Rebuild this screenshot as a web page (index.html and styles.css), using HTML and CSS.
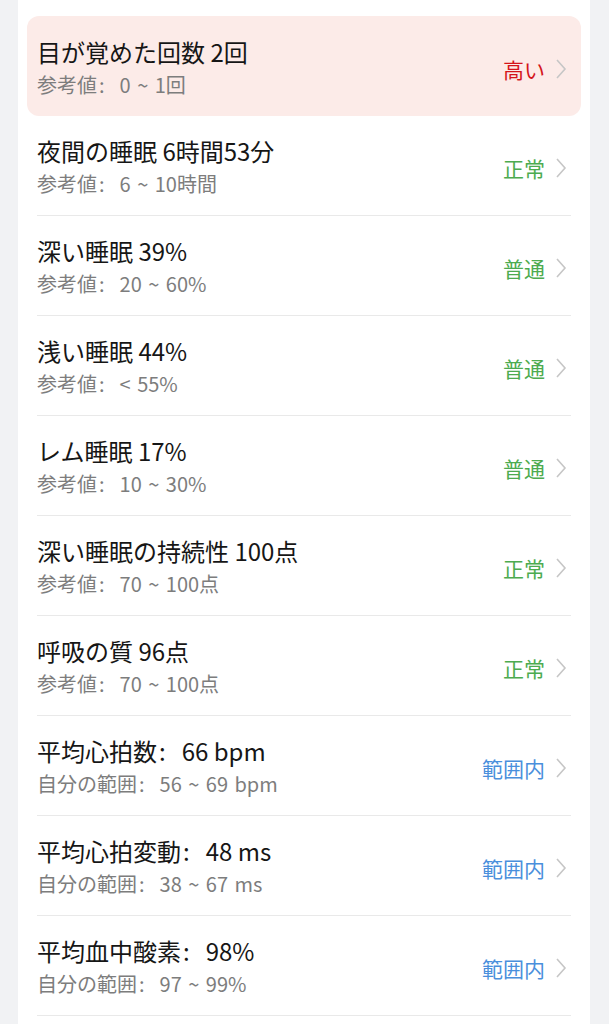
FILE: index.html
```html
<!DOCTYPE html>
<html lang="ja">
<head>
    <meta charset="UTF-8">
    <meta name="viewport" content="width=device-width, initial-scale=1.0">
    <title>睡眠の詳細</title>
    <link rel="stylesheet" href="styles.css">
</head>
<body>
    <div class="card">
        <!-- 注意が必要な項目 -->
        <div class="row row-alert">
            <div class="row-inner">
                <div class="texts">
                    <div class="title">目が覚めた回数 2回</div>
                    <div class="sub">参考値<span class="colon">:</span>0 ~ 1回</div>
                </div>
                <span class="status red">高い</span>
                <svg class="chev" viewBox="0 0 12 22"><path d="M2 2l8 9-8 9"/></svg>
            </div>
        </div>

        <div class="row">
            <div class="row-inner">
                <div class="texts">
                    <div class="title">夜間の睡眠 6時間53分</div>
                    <div class="sub">参考値<span class="colon">:</span>6 ~ 10時間</div>
                </div>
                <span class="status green">正常</span>
                <svg class="chev" viewBox="0 0 12 22"><path d="M2 2l8 9-8 9"/></svg>
            </div>
        </div>

        <div class="row">
            <div class="row-inner">
                <div class="texts">
                    <div class="title">深い睡眠 39%</div>
                    <div class="sub">参考値<span class="colon">:</span>20 ~ 60%</div>
                </div>
                <span class="status green">普通</span>
                <svg class="chev" viewBox="0 0 12 22"><path d="M2 2l8 9-8 9"/></svg>
            </div>
        </div>

        <div class="row">
            <div class="row-inner">
                <div class="texts">
                    <div class="title">浅い睡眠 44%</div>
                    <div class="sub">参考値<span class="colon">:</span>&lt; 55%</div>
                </div>
                <span class="status green">普通</span>
                <svg class="chev" viewBox="0 0 12 22"><path d="M2 2l8 9-8 9"/></svg>
            </div>
        </div>

        <div class="row">
            <div class="row-inner">
                <div class="texts">
                    <div class="title">レム睡眠 17%</div>
                    <div class="sub">参考値<span class="colon">:</span>10 ~ 30%</div>
                </div>
                <span class="status green">普通</span>
                <svg class="chev" viewBox="0 0 12 22"><path d="M2 2l8 9-8 9"/></svg>
            </div>
        </div>

        <div class="row">
            <div class="row-inner">
                <div class="texts">
                    <div class="title">深い睡眠の持続性 100点</div>
                    <div class="sub">参考値<span class="colon">:</span>70 ~ 100点</div>
                </div>
                <span class="status green">正常</span>
                <svg class="chev" viewBox="0 0 12 22"><path d="M2 2l8 9-8 9"/></svg>
            </div>
        </div>

        <div class="row">
            <div class="row-inner">
                <div class="texts">
                    <div class="title">呼吸の質 96点</div>
                    <div class="sub">参考値<span class="colon">:</span>70 ~ 100点</div>
                </div>
                <span class="status green">正常</span>
                <svg class="chev" viewBox="0 0 12 22"><path d="M2 2l8 9-8 9"/></svg>
            </div>
        </div>

        <!-- 心拍・酸素 -->
        <div class="row">
            <div class="row-inner">
                <div class="texts">
                    <div class="title">平均心拍数<span class="colon">:</span>66 bpm</div>
                    <div class="sub">自分の範囲<span class="colon">:</span>56 ~ 69 bpm</div>
                </div>
                <span class="status blue">範囲内</span>
                <svg class="chev" viewBox="0 0 12 22"><path d="M2 2l8 9-8 9"/></svg>
            </div>
        </div>

        <div class="row">
            <div class="row-inner">
                <div class="texts">
                    <div class="title">平均心拍変動<span class="colon">:</span>48 ms</div>
                    <div class="sub">自分の範囲<span class="colon">:</span>38 ~ 67 ms</div>
                </div>
                <span class="status blue">範囲内</span>
                <svg class="chev" viewBox="0 0 12 22"><path d="M2 2l8 9-8 9"/></svg>
            </div>
        </div>

        <div class="row">
            <div class="row-inner">
                <div class="texts">
                    <div class="title">平均血中酸素<span class="colon">:</span>98%</div>
                    <div class="sub">自分の範囲<span class="colon">:</span>97 ~ 99%</div>
                </div>
                <span class="status blue">範囲内</span>
                <svg class="chev" viewBox="0 0 12 22"><path d="M2 2l8 9-8 9"/></svg>
            </div>
        </div>

        <div class="card-end"></div>
    </div>
</body>
</html>
```

FILE: styles.css
```css
* {
    margin: 0;
    padding: 0;
    box-sizing: border-box;
}

body {
    font-family: "Noto Sans CJK JP", "Noto Sans", sans-serif;
    background: #f1f2f4;
    color: #1a1a1a;
}

/* 白いカード */
.card {
    margin: 0 19px 0 18px;
    background: #fff;
    padding: 16px 9px 0;
}

.row {
    height: 100px;
}

.row-inner {
    height: 100%;
    margin: 0 10px;
    display: flex;
    align-items: center;
    border-bottom: 1px solid #e9e9e9;
    padding-top: 5px;
}

.row-alert {
    background: #fcebe8;
    border-radius: 12px;
}

.row-alert .row-inner {
    border-bottom: none;
}

.texts {
    flex: 1;
}

.title {
    font-size: 24px;
    line-height: 32px;
    color: #161616;
}

.sub {
    font-size: 20px;
    line-height: 34px;
    color: #7d7d7d;
    word-spacing: 2px;
}

/* 全角コロン（左寄せ） */
.colon {
    margin: 0 16px 0 2px;
}

.sub .colon {
    margin: 0 15px 0 2px;
}

.status {
    font-size: 21px;
    margin-right: 10px;
}

.red { color: #d4151b; }
.green { color: #4dab4f; }
.blue { color: #4a8fdc; }

.chev {
    width: 12px;
    height: 22px;
    fill: none;
    stroke: #c6c6c6;
    stroke-width: 1.6;
    margin-right: 4px;
}

.card-end {
    height: 40px;
}
```
